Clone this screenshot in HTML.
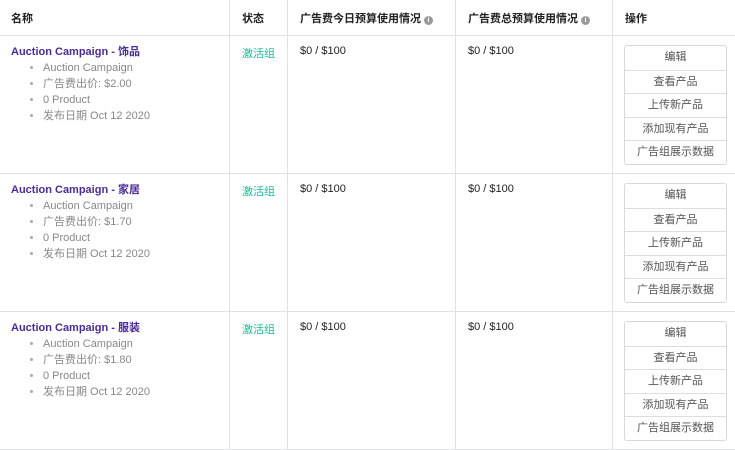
<!DOCTYPE html>
<html><head><meta charset="utf-8"><style>
*{margin:0;padding:0;box-sizing:border-box}
body{width:735px;height:449px;overflow:hidden;background:#fff;font-family:"Liberation Sans","Noto Sans CJK SC",sans-serif;font-size:11px;color:#222}
table{border-collapse:collapse;position:absolute;left:-2px;top:-1px;table-layout:fixed;width:755px}
td,th{border:1px solid #dfe3e8;vertical-align:top;text-align:left;white-space:nowrap}
th{height:36px;font-weight:bold;padding:0 12px;vertical-align:middle}
td{height:138px;padding:9px 12px 0}
.t{color:#4a2a9a;font-weight:bold;line-height:14px}
ul{margin-left:32px;color:#888;line-height:16px;margin-top:1px}
li::marker{color:#aaa}
.s{color:#1bbc9b}
.i{display:inline-block;width:9px;height:9px;border-radius:50%;background:#999;color:#fff;font-size:7px;text-align:center;line-height:9px;margin-left:3px;vertical-align:0}
.b{border:1px solid #d8d8d8;border-radius:3px;width:103px;margin-left:-1px}
.b div{height:23.5px;line-height:23px;text-align:center;color:#555;border-top:1px solid #ddd}
.b div:first-child{border-top:0}
</style></head><body>
<table>
<colgroup><col style="width:231px"><col style="width:58px"><col style="width:168px"><col style="width:157px"><col style="width:142px"></colgroup>
<tr><th>名称</th><th>状态</th><th>广告费今日预算使用情况<span class="i">i</span></th><th>广告费总预算使用情况<span class="i">i</span></th><th>操作</th></tr>
<tr><td><div class="t">Auction Campaign - 饰品</div><ul><li>Auction Campaign</li><li>广告费出价: $2.00</li><li>0 Product</li><li>发布日期 Oct 12 2020</li></ul></td><td class="s">激活组</td><td>$0 / $100</td><td>$0 / $100</td><td><div class="b"><div>编辑</div><div>查看产品</div><div>上传新产品</div><div>添加现有产品</div><div>广告组展示数据</div></div></td></tr>
<tr><td><div class="t">Auction Campaign - 家居</div><ul><li>Auction Campaign</li><li>广告费出价: $1.70</li><li>0 Product</li><li>发布日期 Oct 12 2020</li></ul></td><td class="s">激活组</td><td>$0 / $100</td><td>$0 / $100</td><td><div class="b"><div>编辑</div><div>查看产品</div><div>上传新产品</div><div>添加现有产品</div><div>广告组展示数据</div></div></td></tr>
<tr><td><div class="t">Auction Campaign - 服装</div><ul><li>Auction Campaign</li><li>广告费出价: $1.80</li><li>0 Product</li><li>发布日期 Oct 12 2020</li></ul></td><td class="s">激活组</td><td>$0 / $100</td><td>$0 / $100</td><td><div class="b"><div>编辑</div><div>查看产品</div><div>上传新产品</div><div>添加现有产品</div><div>广告组展示数据</div></div></td></tr>
</table>
</body></html>
